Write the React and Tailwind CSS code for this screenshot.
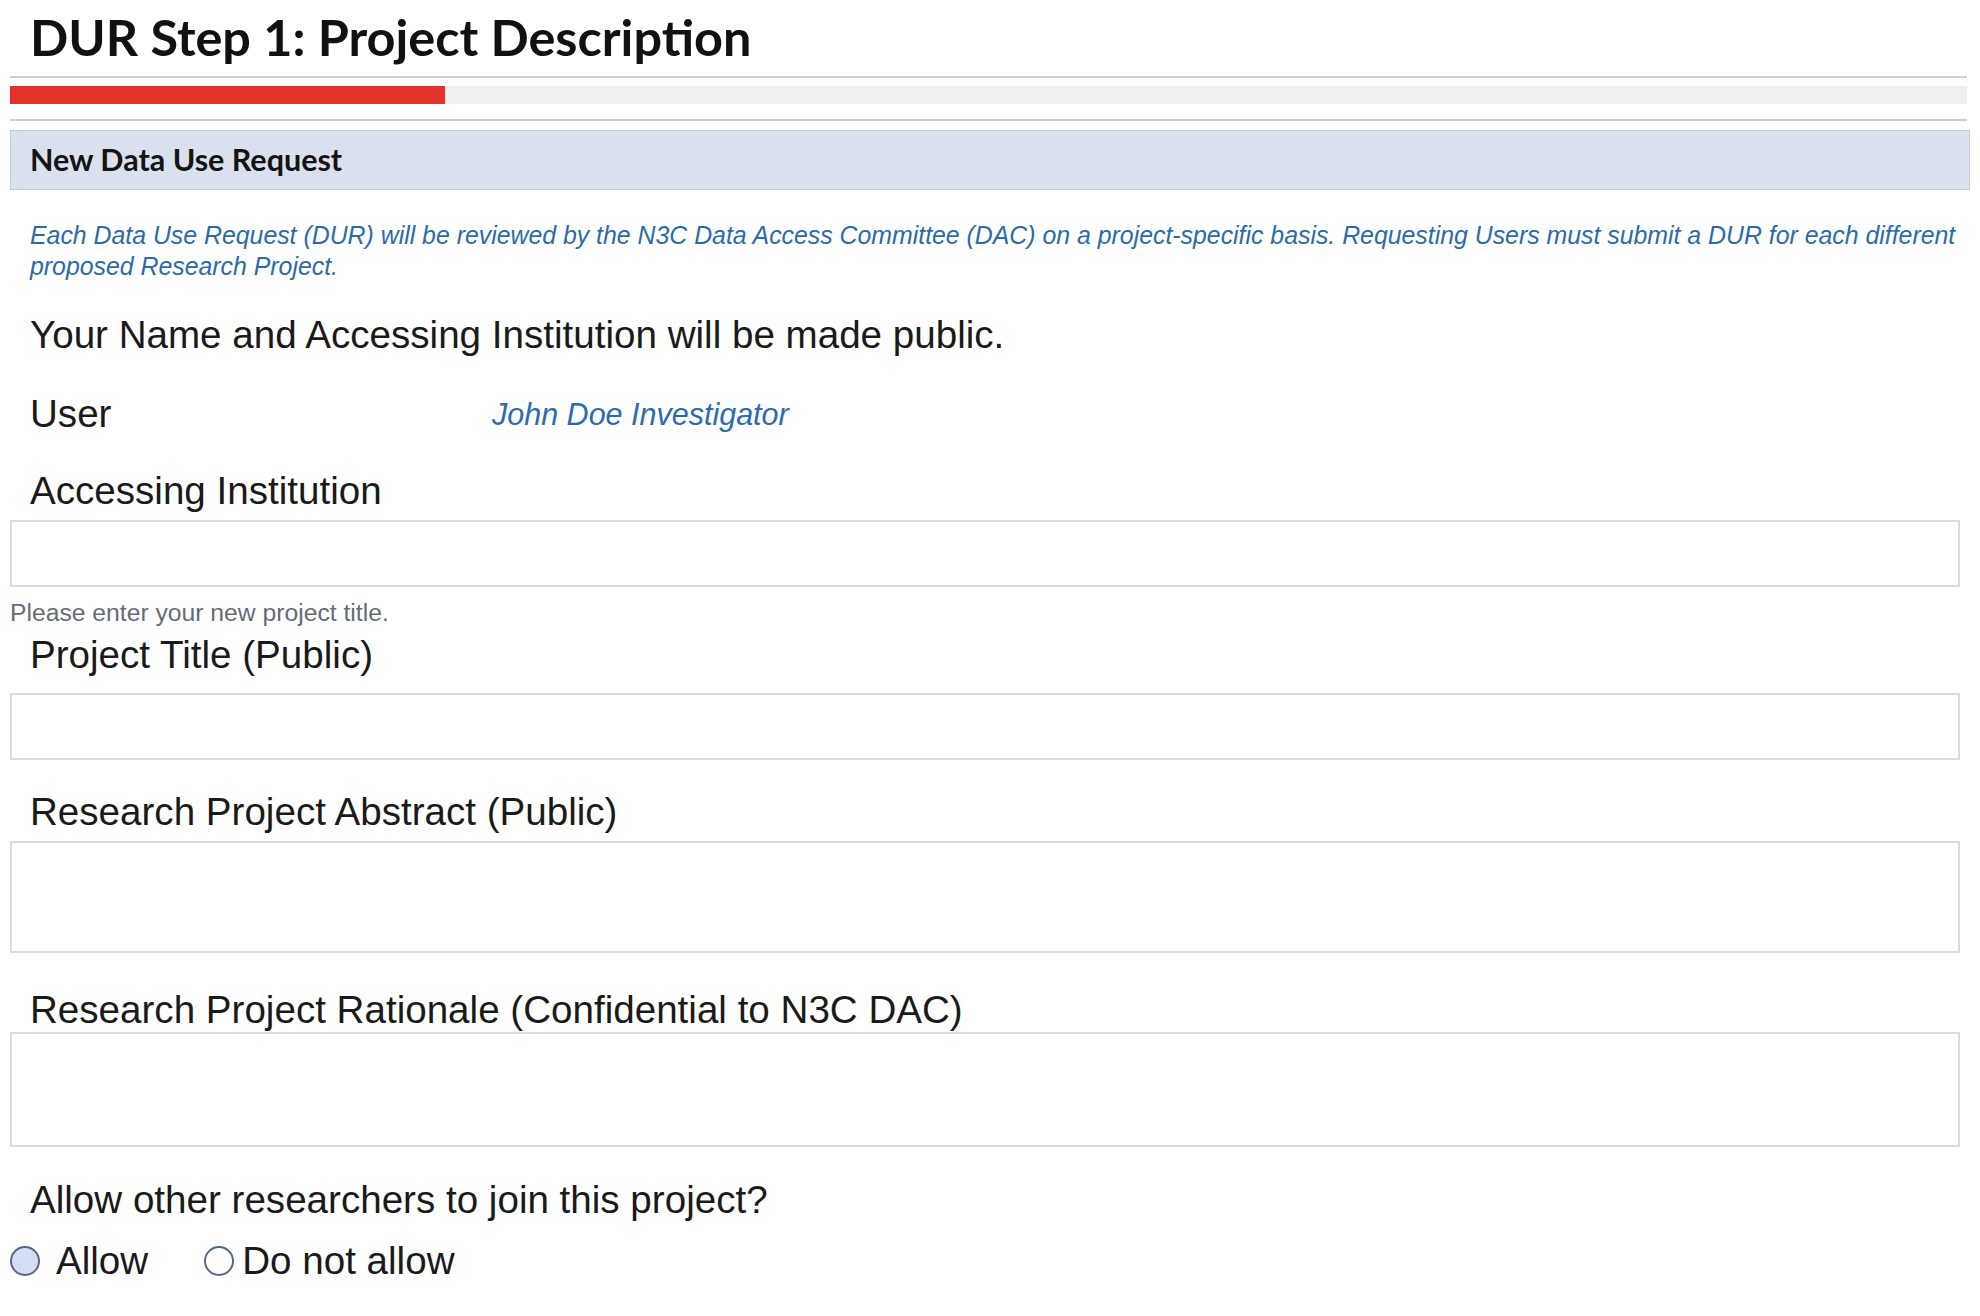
import React from "react";

const sans = { fontFamily: '"Liberation Sans", Arial, sans-serif' };

function Label({ children, className = "" }) {
  return (
    <div
      className={`pl-[20px] text-[38.6px] leading-[38px] text-[#1a1a1a] ${className}`}
    >
      {children}
    </div>
  );
}

function Box({ h, className = "" }) {
  return (
    <div
      className={`mr-[10px] border-2 border-[#dcdcdc] bg-white ${h} ${className}`}
    />
  );
}

function Radio({ filled }) {
  return (
    <span
      className={`inline-block h-[30px] w-[30px] rounded-full border-[2.5px] border-[#56648c] ${
        filled ? "bg-[#d3def2]" : "bg-white"
      }`}
    />
  );
}

export default function App() {
  return (
    <div className="min-h-[1316px] w-[1980px] bg-white" style={sans}>
      <div className="ml-[10px] w-[1960px]">
        {/* Title */}
        <div className="h-[76px] pl-[20px] pt-[11px]">
          <h1 className="font-['Lato',sans-serif] text-[50.4px] font-bold leading-[51px] text-[#111]">
            DUR Step 1: Project Description
          </h1>
        </div>
        <div className="mr-[3px] h-[2px] bg-[#cfcfcf]" />
        <div className="mr-[3px] mt-[8px] flex h-[18px] bg-[#efefef]">
          <div className="h-full w-[435px] bg-[#e2322a]" />
        </div>
        <div className="mr-[3px] mt-[15px] h-[2px] bg-[#cfcfcf]" />

        {/* Header */}
        <div className="mt-[9px] flex h-[60px] items-center border border-[#c7cdd8] bg-[#dae1ee] pl-[19px]">
          <span className="font-['Lato',sans-serif] text-[30.5px] font-bold text-[#141414]">
            New Data Use Request
          </span>
        </div>

        {/* Blue intro */}
        <p className="mt-[30px] whitespace-nowrap pl-[20px] text-[24.85px] italic leading-[31px] text-[#2b6ba7]">
          Each Data Use Request (DUR) will be reviewed by the N3C Data Access
          Committee (DAC) on a project-specific basis. Requesting Users must
          submit a DUR for each different
          <br />
          proposed Research Project.
        </p>

        <Label className="mt-[34px]">
          Your Name and Accessing Institution will be made public.
        </Label>

        <div className="mt-[41px] flex items-center">
          <div className="w-[482px] pl-[20px] text-[38.6px] leading-[38px] text-[#1a1a1a]">
            User
          </div>
          <div className="text-[30.5px] italic leading-[38px] text-[#2d6bb0]">
            John Doe Investigator
          </div>
        </div>

        <Label className="mt-[39px]">Accessing Institution</Label>
        <Box h="h-[67px]" className="mt-[10px]" />

        <div className="mt-[13px] text-[24.7px] leading-[25px] text-[#646c76]">
          Please enter your new project title.
        </div>
        <Label className="mt-[11px]">Project Title (Public)</Label>
        <Box h="h-[67px]" className="mt-[19px]" />

        <Label className="mt-[33px]">Research Project Abstract (Public)</Label>
        <Box h="h-[112px]" className="mt-[10px]" />

        <Label className="mt-[38px]">
          Research Project Rationale (Confidential to N3C DAC)
        </Label>
        <Box h="h-[115px]" className="mt-[3px]" />

        <Label className="mt-[34px]">
          Allow other researchers to join this project?
        </Label>

        <div className="mt-[23px] flex h-[38px] items-center text-[38.6px] leading-[38px] text-[#1a1a1a]">
          <Radio filled />
          <span className="ml-[16px]">Allow</span>
          <span className="ml-[56px] flex items-center">
            <Radio />
            <span className="ml-[8px]">Do not allow</span>
          </span>
        </div>
      </div>
    </div>
  );
}
